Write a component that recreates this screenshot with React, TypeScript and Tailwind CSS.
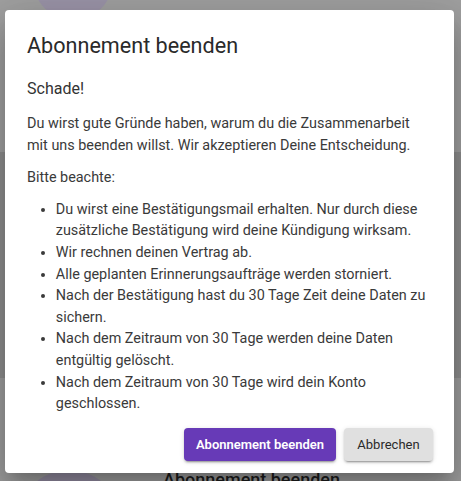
import React from "react";

const items: string[] = [
  "Du wirst eine Bestätigungsmail erhalten. Nur durch diese zusätzliche Bestätigung wird deine Kündigung wirksam.",
  "Wir rechnen deinen Vertrag ab.",
  "Alle geplanten Erinnerungsaufträge werden storniert.",
  "Nach der Bestätigung hast du 30 Tage Zeit deine Daten zu sichern.",
  "Nach dem Zeitraum von 30 Tage werden deine Daten entgültig gelöscht.",
  "Nach dem Zeitraum von 30 Tage wird dein Konto geschlossen.",
];

export default function App() {
  return (
    <div
      className="relative w-[461px] h-[481px] overflow-hidden bg-[#a0a0a0]"
      style={{ fontFamily: "Roboto, 'Liberation Sans', sans-serif" }}
    >
      {/* page behind the backdrop */}
      <div className="flex flex-col h-full">
        <div className="h-[152px] bg-[#a0a0a0] relative">
          <div className="absolute left-[33px] top-[-60px] w-[80px] h-[80px] rounded-full bg-[#9b94a8]" />
        </div>
        <div className="h-[226px] bg-[#8e8e8e]" />
        <div className="flex-1 bg-[#9e9e9e] relative">
          <div className="absolute left-[17px] top-[92px] w-[104px] h-[104px] rounded-full bg-[#958ea3]" />
          <div className="absolute left-[163px] top-[90px] text-[18px] font-medium text-[#1e1e1e] leading-[24px]">
            Abonnement beenden
          </div>
        </div>
      </div>

      {/* dialog */}
      <div className="absolute left-[5px] top-[10px] w-[449px] h-[463px] bg-white rounded-[4px] shadow-[0_11px_15px_-7px_rgba(0,0,0,0.2),0_24px_38px_3px_rgba(0,0,0,0.14),0_9px_46px_8px_rgba(0,0,0,0.12)] flex flex-col text-[#3a3a3a]">
        <h2 className="px-[22px] pt-[19px] pb-[14px] text-[21.6px] leading-[34px] font-normal text-[#2a2a2a]">
          Abonnement beenden
        </h2>
        <div className="px-[22px] flex flex-col">
          <p className="text-[16px] leading-[24px] mb-[12px] text-[#333]">Schade!</p>
          <p className="text-[14.4px] leading-[21.6px] mb-[11px]">
            Du wirst gute Gründe haben, warum du die Zusammenarbeit mit uns beenden willst. Wir akzeptieren Deine Entscheidung.
          </p>
          <p className="text-[14.4px] leading-[21.6px] mb-[10px]">Bitte beachte:</p>
          <ul className="list-disc pl-[28.8px] text-[14.4px] leading-[21.6px]">
            {items.map((t) => (
              <li key={t}>{t}</li>
            ))}
          </ul>
        </div>
        <div className="flex justify-end gap-[8px] px-[21px] mt-auto mb-[12px]">
          <button className="h-[33px] w-[152px] rounded-[4px] bg-[#673ab7] text-white text-[13px] font-semibold shadow-[0_3px_1px_-2px_rgba(0,0,0,0.2),0_2px_2px_0_rgba(0,0,0,0.14),0_1px_5px_0_rgba(0,0,0,0.12)]">
            Abonnement beenden
          </button>
          <button className="h-[33px] w-[89px] rounded-[4px] bg-[#e0e0e0] text-[#2a2a2a] text-[13px] font-normal shadow-[0_3px_1px_-2px_rgba(0,0,0,0.2),0_2px_2px_0_rgba(0,0,0,0.14),0_1px_5px_0_rgba(0,0,0,0.12)]">
            Abbrechen
          </button>
        </div>
      </div>
    </div>
  );
}
